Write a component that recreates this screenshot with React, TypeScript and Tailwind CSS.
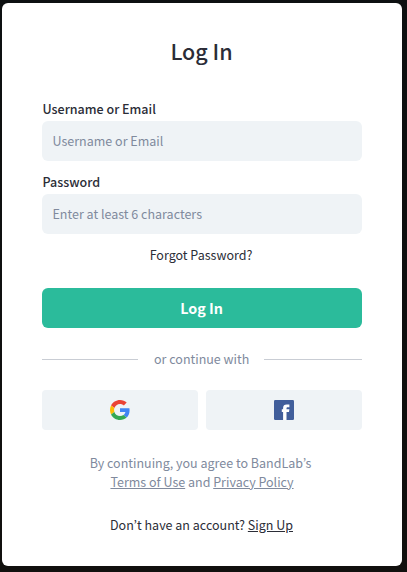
import clsx from 'clsx';
import type { ReactNode } from 'react';

const TEXT = 'text-[12.5px] leading-5';

type FieldProps = {
  id: string;
  label: string;
  type: string;
  placeholder: string;
};

const Field = ({ id, label, type, placeholder }: FieldProps) => (
  <div className="flex flex-col gap-0.5">
    <label htmlFor={id} className={clsx(TEXT, 'pl-[0.5px] font-medium')}>
      {label}
    </label>
    <input
      id={id}
      type={type}
      placeholder={placeholder}
      className={clsx(
        'h-10 w-full rounded-md bg-[#eff3f6] px-[10.5px] pb-px text-[12.5px]',
        'outline-none placeholder:text-[#808a9d]'
      )}
    />
  </div>
);

const SocialButton = ({ label, children }: { label: string; children: ReactNode }) => (
  <button
    type="button"
    aria-label={label}
    className="flex h-10 flex-1 items-center justify-center rounded bg-[#eff3f6]"
  >
    {children}
  </button>
);

const GoogleIcon = () => (
  <svg viewBox="0 0 48 48" className="size-5" aria-hidden="true">
    <path fill="#ea4335" d="M24 9.5c3.54 0 6.71 1.22 9.21 3.6l6.85-6.85C35.9 2.38 30.47 0 24 0 14.62 0 6.51 5.38 2.56 13.22l7.98 6.19C12.43 13.72 17.74 9.5 24 9.5z" />
    <path fill="#4285f4" d="M46.98 24.55c0-1.57-.15-3.09-.38-4.55H24v9.02h12.94c-.58 2.96-2.26 5.48-4.78 7.18l7.73 6c4.51-4.18 7.09-10.36 7.09-17.65z" />
    <path fill="#fbbc05" d="M10.53 28.59c-.48-1.45-.76-2.99-.76-4.59s.27-3.14.76-4.59l-7.98-6.19C.92 16.46 0 20.12 0 24c0 3.88.92 7.54 2.56 10.78l7.97-6.19z" />
    <path fill="#34a853" d="M24 48c6.48 0 11.93-2.13 15.89-5.81l-7.73-6c-2.15 1.45-4.92 2.3-8.16 2.3-6.26 0-11.57-4.22-13.47-9.91l-7.98 6.19C6.51 42.62 14.62 48 24 48z" />
  </svg>
);

const FacebookIcon = () => (
  <svg viewBox="0 0 20 20" className="size-5" aria-hidden="true">
    <rect width="20" height="20" rx="1.2" fill="#415e9b" />
    <path fill="#fff" d="M9.1 20v-7.9H7.8V9.2h1.3V7.9c0-2.3 1.3-3.4 3.6-3.4h2.7v2.7h-1.6c-1 0-1.3.4-1.3 1.2v.8h2.9l-.4 2.9h-2.5V20z" />
  </svg>
);

export default function App() {
  return (
    <main className={clsx(
      "h-[572px] w-[407px] bg-[#0c0e0f] pl-0.5 pt-[3px] text-[#2b2d37]",
      "bg-linear-to-b from-[#0d1011] to-[#11100e]",
      "font-['Noto_Sans_CJK_KR','Noto_Sans',sans-serif]"
    )}>
      <section className="flex h-[563px] w-[400px] flex-col rounded-md bg-white px-10 pt-8">
        <h1 className="pr-px text-center text-[21.5px] leading-8 font-medium">Log In</h1>

        <form className="mt-8 flex flex-col gap-[11px]" onSubmit={(event) => event.preventDefault()}>
          <Field id="username" label="Username or Email" type="text" placeholder="Username or Email" />
          <Field id="password" label="Password" type="password" placeholder="Enter at least 6 characters" />
          <a href="#forgot" className={clsx(TEXT, 'self-center pr-0.5')}>Forgot Password?</a>
          <button
            type="submit"
            className="mt-3 h-10 rounded-md bg-[#2bbb9b] pr-px text-[14.3px] font-bold text-white"
          >
            Log In
          </button>
        </form>

        <div className="mt-[21px] flex items-center gap-4 text-[#808a9d]">
          <span className="h-px w-24 bg-[#c9cdd4]" />
          <span className={clsx(TEXT, '-mr-px whitespace-nowrap')}>or continue with</span>
          <span className="h-px flex-1 bg-[#c9cdd4]" />
        </div>

        <div className="mt-[21px] flex gap-2">
          <SocialButton label="Google">
            <GoogleIcon />
          </SocialButton>
          <SocialButton label="Facebook">
            <FacebookIcon />
          </SocialButton>
        </div>

        <p className="mt-[23px] text-center text-[12.5px] leading-[19px] text-[#808a9d]">
          <span className="pr-[3px]">By continuing, you agree to BandLab’s</span>
          <br />
          <a href="#terms" className="underline">Terms of Use</a> and{' '}
          <a href="#privacy" className="underline">Privacy Policy</a>
        </p>
        <p className={clsx(TEXT, 'mt-6 pr-px text-center')}>
          Don’t have an account? <a href="#signup" className="underline">Sign Up</a>
        </p>
      </section>
    </main>
  );
}
